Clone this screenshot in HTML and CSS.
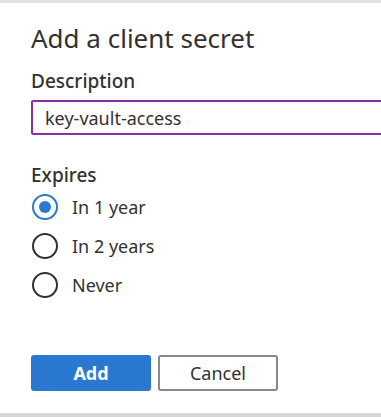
FILE: index.html
```html
<!DOCTYPE html>
<html lang="en">
<head>
    <meta charset="UTF-8">
    <meta name="viewport" content="width=device-width, initial-scale=1.0">
    <title>Add a client secret</title>
    <link rel="stylesheet" href="styles.css">
</head>
<body>
    <div class="panel">
        <h2 class="title">Add a client secret</h2>

        <label class="field-label" for="description">Description</label>
        <div class="text-field">
            <input id="description" type="text" value="key-vault-access">
        </div>

        <div class="field-label expires">Expires</div>
        <div class="choices">
            <label class="choice">
                <span class="radio checked"></span>
                <span>In 1 year</span>
            </label>
            <label class="choice">
                <span class="radio"></span>
                <span>In 2 years</span>
            </label>
            <label class="choice">
                <span class="radio"></span>
                <span>Never</span>
            </label>
        </div>

        <div class="actions">
            <button class="btn primary">Add</button>
            <button class="btn">Cancel</button>
        </div>
    </div>
</body>
</html>
```

FILE: styles.css
```css
body {
    font-family: "Noto Sans", "Open Sans", sans-serif;
    margin: 0;
    background-color: #fff;
    color: #323130;
    overflow: hidden;
}

.panel {
    height: 417px;
    box-sizing: border-box;
    overflow: hidden;
    border-top: 3px solid #e1e1e1;
    border-bottom: 4px solid #d6d6d6;
    padding-left: 31px;
    padding-top: 17px;
}

.title {
    margin: 0;
    font-size: 26px;
    font-weight: 400;
    line-height: 36px;
}

.field-label {
    display: block;
    margin-top: 11px;
    font-size: 19px;
    font-weight: 500;
    line-height: 28px;
}

.text-field {
    margin-top: 5px;
    margin-right: -20px;
    height: 35px;
    box-sizing: border-box;
    border: 2px solid #8a2fa6;
    border-radius: 2px;
}

.text-field input {
    border: none;
    outline: none;
    width: 100%;
    height: 100%;
    box-sizing: border-box;
    padding: 0 0 0 12px;
    font-family: inherit;
    font-size: 18px;
    color: #323130;
    background: transparent;
}

.expires {
    margin-top: 28px;
    line-height: 24px;
}

.choice {
    display: flex;
    align-items: center;
    gap: 14px;
    height: 39px;
    font-size: 18px;
}

.radio {
    width: 26px;
    height: 26px;
    box-sizing: border-box;
    margin-left: 1px;
    border: 2px solid #323130;
    border-radius: 50%;
    display: flex;
    align-items: center;
    justify-content: center;
}

.radio.checked {
    border-color: #2b78d0;
}

.radio.checked::after {
    content: "";
    width: 12px;
    height: 12px;
    border-radius: 50%;
    background-color: #2b78d0;
}

.actions {
    display: flex;
    gap: 7px;
    margin-top: 51px;
}

.btn {
    width: 120px;
    height: 36px;
    box-sizing: border-box;
    border: 2px solid #8a8886;
    border-radius: 3px;
    background-color: #fff;
    font-family: inherit;
    font-size: 18px;
    color: #323130;
    padding: 0;
}

.btn.primary {
    border-color: #2b78d0;
    background-color: #2b78d0;
    color: #fff;
    font-weight: 700;
}
```
